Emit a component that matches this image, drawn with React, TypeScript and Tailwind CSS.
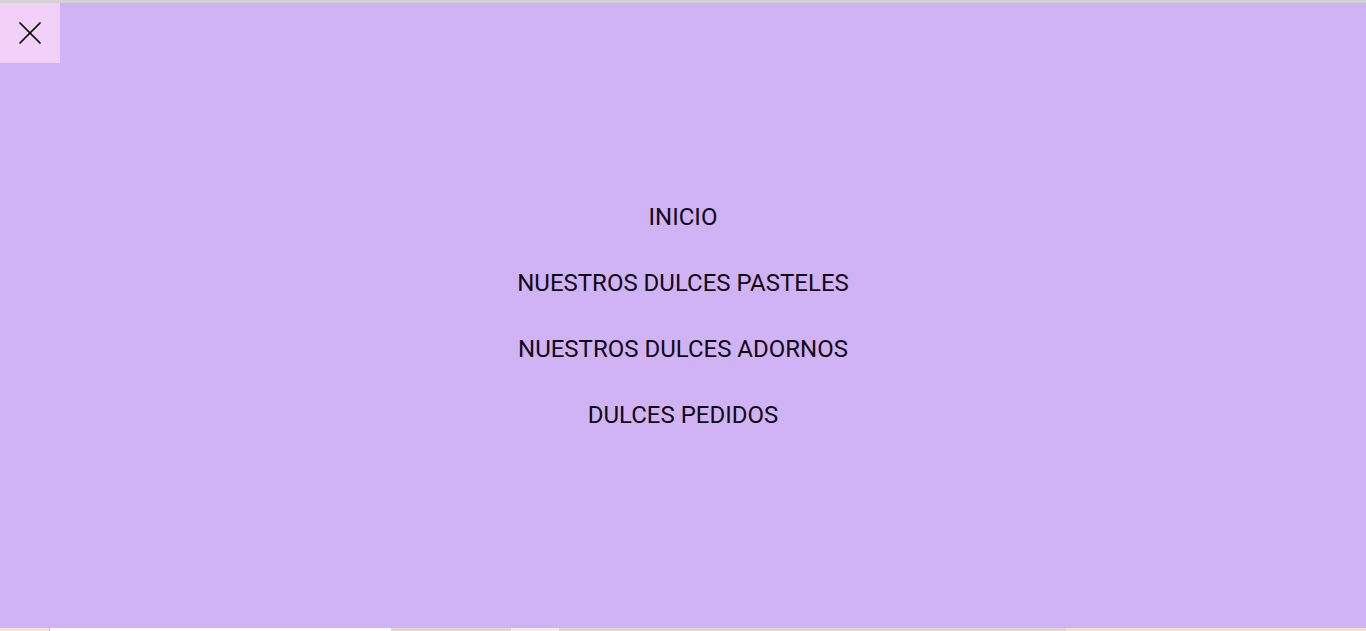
const links = ['INICIO', 'NUESTROS DULCES PASTELES', 'NUESTROS DULCES ADORNOS', 'DULCES PEDIDOS'];

const App = () => {
  return (
    <div className="h-[631px] w-full flex flex-col overflow-hidden bg-white font-['Roboto',sans-serif]">
      <div className="h-[3px] bg-[#d3d3d3]" />
      <div className="flex-1 bg-[#d0b3f5] relative flex items-center justify-center">
        <button className="absolute left-0 top-0 w-[60px] h-[60px] bg-[#f2d1f8] flex items-center justify-center text-black">
          <svg width="24" height="24" viewBox="0 0 24 24" fill="none" stroke="currentColor" strokeWidth="1.7" strokeLinecap="round">
            <line x1="2" y1="2" x2="22" y2="22" />
            <line x1="22" y1="2" x2="2" y2="22" />
          </svg>
        </button>
        <nav className="flex flex-col items-center gap-[38px]">
          {links.map((l) => (
            <a key={l} className="text-[24px] leading-[28px] text-[#120812] cursor-pointer">
              {l}
            </a>
          ))}
        </nav>
      </div>
      <div className="h-[3px] flex">
        <div className="w-[49px] bg-[#efe3da]" />
        <div className="w-[342px] bg-white border-l border-[#bbb]" />
        <div className="w-[120px] bg-[#ddd6d0]" />
        <div className="w-[48px] bg-[#f1ecea]" />
        <div className="flex-1 bg-[#ddd7d2]" />
        <div className="w-[300px] bg-[#eee1d9]" />
      </div>
    </div>
  );
};

export default App;
